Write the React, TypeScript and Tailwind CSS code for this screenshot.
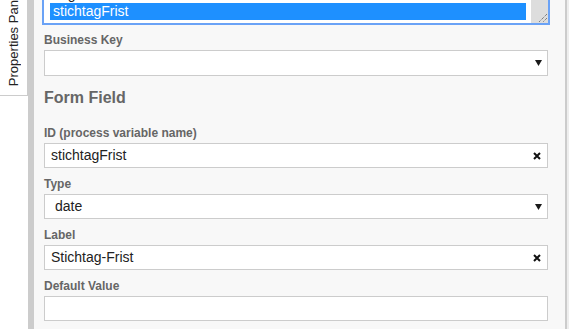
const FONT = { fontFamily: '"Liberation Sans", Arial, sans-serif' };

function Arrow() {
  return (
    <svg width="7" height="6" viewBox="0 0 7 6">
      <polygon points="0,0 7,0 3.5,6" fill="#1a1a1a" />
    </svg>
  );
}

function Clear() {
  return (
    <svg width="8" height="8" viewBox="0 0 8 8">
      <path d="M1 1 L7 7 M7 1 L1 7" stroke="#111" strokeWidth="2" />
    </svg>
  );
}

function Field({ label, value, icon, extraPad }: { label: string; value?: string; icon?: 'arrow' | 'clear'; extraPad?: boolean }) {
  return (
    <div>
      <div className="text-[12px] leading-[16px] font-bold text-[#666]">{label}</div>
      <div className="mt-[2px] h-[25px] border border-[#ccc] bg-white flex items-center">
        <span className={`flex-1 text-[14px] text-[#222] ${extraPad ? 'pl-[10px]' : 'pl-[6px]'}`}>{value}</span>
        {icon === 'arrow' && <span className="pr-[5px] flex"><Arrow /></span>}
        {icon === 'clear' && <span className="pr-[6px] flex"><Clear /></span>}
      </div>
    </div>
  );
}

export default function App() {
  return (
    <div style={FONT} className="w-[569px] h-[329px] flex overflow-hidden bg-white">
      {/* Side tab */}
      <div className="w-[28px] flex flex-col">
        <div className="h-[96px] border-b border-r border-[#ccc] flex flex-col justify-end overflow-hidden pb-[9px]">
          <div className="shrink-0 [writing-mode:vertical-rl] rotate-180 text-[13px] leading-[28px] text-[#222] whitespace-nowrap">
            Properties Panel
          </div>
        </div>
      </div>
      <div className="w-[6px] bg-[#ccc]" />

      {/* Panel */}
      <div className="flex-1 bg-[#f8f8f8] pl-[10px] pr-[17px]">
        {/* focused textarea */}
        <div className="-mx-[2px] h-[25px] border-x-2 border-b-2 border-[#6aa2f6] bg-white flex">
          <div className="flex-1 overflow-hidden flex flex-col justify-end pl-[6px] pr-[5px] pb-[3px]">
            <div className="shrink-0 text-[14px] leading-[17px] pl-[3px] text-[#222]">Tag der Frist</div>
            <div className="shrink-0 h-[17px] bg-[#1e90ff] text-white text-[14px] leading-[17px] pl-[3px]">stichtagFrist</div>
          </div>
          <div className="w-[17px] bg-[#ddd] flex items-end justify-end">
            <svg width="11" height="11" viewBox="0 0 11 11">
              <path d="M10 2 L2 10 M10 6 L6 10" stroke="#555" strokeWidth="1" strokeDasharray="1 1" />
            </svg>
          </div>
        </div>

        <div className="mt-[7px] text-[12px] leading-[16px] font-bold text-[#666]">Business Key</div>
        <div className="mt-[2px] h-[26px] border border-[#ccc] bg-white flex items-center justify-end pr-[5px]">
          <Arrow />
        </div>

        <div className="mt-[12px] text-[16px] leading-[20px] font-bold text-[#666]">Form Field</div>

        <div className="mt-[17px] flex flex-col gap-[8px]">
          <Field label="ID (process variable name)" value="stichtagFrist" icon="clear" />
          <Field label="Type" value="date" icon="arrow" extraPad />
          <Field label="Label" value="Stichtag-Frist" icon="clear" />
          <Field label="Default Value" />
        </div>
      </div>

      <div className="w-[2px] bg-[#ccc]" />
      <div className="w-[2px] bg-[#eee]" />
    </div>
  );
}
